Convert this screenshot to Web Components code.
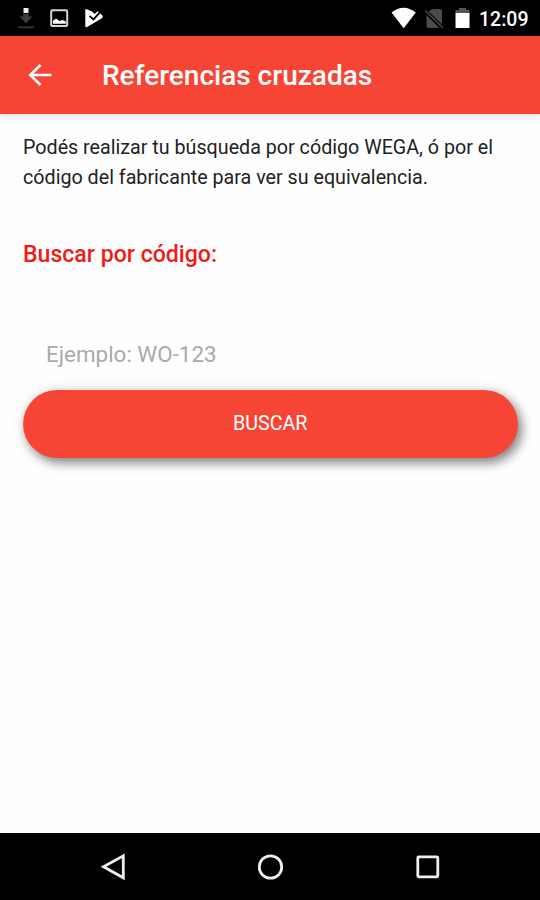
<!DOCTYPE html>
<html lang="es">
<head>
  <meta charset="UTF-8">
  <title>Referencias cruzadas</title>
  <style>
    body {
      margin: 0;
      font-family: Roboto, "Liberation Sans", sans-serif;
      background: #fefefe;
    }
  </style>
</head>
<body>
  <app-screen>
    <status-bar slot="status">12:09</status-bar>
    <app-header slot="header">Referencias cruzadas</app-header>
    <search-form>
      <span slot="intro">Podés realizar tu búsqueda por código WEGA, ó por el<br>código del fabricante para ver su equivalencia.</span>
      <span slot="title">Buscar por código:</span>
      <search-button slot="action">BUSCAR</search-button>
    </search-form>
    <nav-bar slot="nav"></nav-bar>
  </app-screen>

  <script>
    class BaseElement extends HTMLElement {
      constructor () {
        super();
        this.attachShadow({ mode: "open" });
      }
      connectedCallback () {
        const template = document.createElement('template');
        template.innerHTML = this.getTemplate() + `<style>${this.getStyles()}</style>`;
        this.shadowRoot.replaceChildren(template.content.cloneNode(true));
      }
    }

    class AppScreen extends BaseElement {
      getTemplate () {
        return `
          <slot name="status"></slot>
          <slot name="header"></slot>
          <main><slot></slot></main>
          <slot name="nav"></slot>
        `;
      }
      getStyles () {
        return `
          :host {
            display: flex;
            flex-direction: column;
            width: 540px;
            height: 900px;
            overflow: hidden;
          }
          main { flex: 1; min-height: 0; }
        `;
      }
    }

    class StatusBar extends BaseElement {
      getTemplate () {
        return `
          <svg width="110" height="36" viewBox="0 0 110 36">
            <!-- descarga -->
            <path d="M23.5 8h5v5h-5z" fill="#eee"/>
            <path d="M23.3 14h5.4v2.5h3.8L26 23.3l-6.5-6.8h3.8z" fill="#3d3d3d"/>
            <path d="M18 26.3h16v2H18z" fill="#333"/>
            <!-- imagen -->
            <rect x="51.2" y="10.2" width="16" height="15.8" rx="1" fill="none" stroke="#d5d5d5" stroke-width="2"/>
            <path d="M53 23.7v-3l3-2.3 3.4 2.7 3.2-1 3.2 1.3v2.3z" fill="#fff"/>
            <!-- play -->
            <path d="M86 9l6 2.600 2.600 2.400 3.200-2.800 5.200 4.800-1 2.200-15 8.900q-1.700.500-1.700-.900V10q0-1.300.700-1z" fill="#fff"/>
            <path d="M89.5 15.8l4 3.6 6.300-7" fill="none" stroke="#000" stroke-width="1.8"/>
          </svg>
          <div class="right">
            <svg width="84" height="36" viewBox="388 0 84 36">
              <path d="M391.5 12.5Q403.5 3 415.8 12.5L403.7 28.2z" fill="#fff"/>
              <!-- sin sim -->
              <path d="M432 9h8q2 0 2 2v13.5L428.8 11.5zM426.5 15L439.5 28h-11q-2 0-2-2z" fill="#4b4b4b"/>
              <path d="M425.3 10.5L443 28" stroke="#4b4b4b" stroke-width="1.5"/>
              <path d="M459 8h7v2h3.5v3.5h-14V10h3.5z" fill="#555"/>
              <path d="M455.5 13h14v15h-14z" fill="#fff"/>
            </svg>
            <span><slot></slot></span>
          </div>
        `;
      }
      getStyles () {
        return `
          :host {
            display: flex;
            justify-content: space-between;
            flex: none;
            height: 35.5px;
            background: #000;
            color: #fff;
          }
          svg { display: block; flex: none; }
          .right { display: flex; width: 152px; }
          span {
            margin-left: 7px;
            font-size: 19.5px;
            font-weight: 500;
            line-height: 40px;
          }
        `;
      }
    }

    class AppHeader extends BaseElement {
      getTemplate () {
        return `
          <svg width="24" height="24" viewBox="0 0 24 24">
            <path d="M23.5 12H2.5M12.5 2L2.3 12l10.2 10" fill="none" stroke="#fff" stroke-width="2.6"/>
          </svg>
          <h1><slot></slot></h1>
        `;
      }
      getStyles () {
        return `
          :host {
            display: flex;
            align-items: center;
            flex: none;
            height: 78.5px;
            padding-left: 28px;
            background: #f64435;
            color: #fff;
            box-shadow: 0 2px 9px rgba(0, 0, 0, .12);
          }
          h1 {
            margin: 2px 0 0 50px;
            font-size: 28px;
            font-weight: 500;
            line-height: 32px;
            white-space: nowrap;
          }
        `;
      }
    }

    class SearchForm extends BaseElement {
      getTemplate () {
        return `
          <p><slot name="intro"></slot></p>
          <h2><slot name="title"></slot></h2>
          <input type="text" placeholder="Ejemplo: WO-123">
          <slot name="action"></slot>
        `;
      }
      getStyles () {
        return `
          :host {
            display: flex;
            flex-direction: column;
            padding: 19px 22.5px 0 23px;
          }
          p {
            margin: 0;
            color: #222;
            font-size: 19.7px;
            line-height: 30px;
            white-space: nowrap;
          }
          h2 {
            margin: 47px 0 0;
            color: #f01b16;
            font-size: 23.1px;
            font-weight: 500;
            line-height: 30px;
          }
          input {
            box-sizing: border-box;
            height: 44px;
            margin: 62px 0 14px;
            padding: 0 23px;
            border: 0;
            outline: 0;
            background: none;
            font: 22.4px Roboto, "Liberation Sans", sans-serif;
          }
          input::placeholder { color: #aaa; }
        `;
      }
    }

    class SearchButton extends BaseElement {
      getTemplate () {
        return `<button><slot></slot></button>`;
      }
      getStyles () {
        return `
          :host { display: block; }
          button {
            display: block;
            width: 100%;
            height: 67.5px;
            padding: 0;
            border: 0;
            border-radius: 34px;
            background: #f64435;
            box-shadow: 4px 5px 11px rgba(0, 0, 0, .45), 0 0 14px rgba(0, 0, 0, .1);
            color: #fff;
            font: 19.7px Roboto, "Liberation Sans", sans-serif;
          }
        `;
      }
    }

    class NavBar extends BaseElement {
      getTemplate () {
        return `
          <svg viewBox="0 0 28 28"><path d="M24.3 2.8v22L4.5 13.8z"/></svg>
          <svg viewBox="0 0 28 28"><circle cx="14.5" cy="14" r="11.2"/></svg>
          <svg viewBox="0 0 28 28"><rect x="3.8" y="3.8" width="20" height="20" rx="1"/></svg>
        `;
      }
      getStyles () {
        return `
          :host {
            display: flex;
            justify-content: space-between;
            align-items: center;
            flex: none;
            box-sizing: border-box;
            height: 67px;
            padding: 0 98.5px 0 99px;
            background: #000;
          }
          svg {
            width: 28px;
            height: 28px;
            fill: none;
            stroke: #eee;
            stroke-width: 2.8;
          }
        `;
      }
    }

    customElements.define('app-screen', AppScreen);
    customElements.define('status-bar', StatusBar);
    customElements.define('app-header', AppHeader);
    customElements.define('search-form', SearchForm);
    customElements.define('search-button', SearchButton);
    customElements.define('nav-bar', NavBar);
  </script>
</body>
</html>
